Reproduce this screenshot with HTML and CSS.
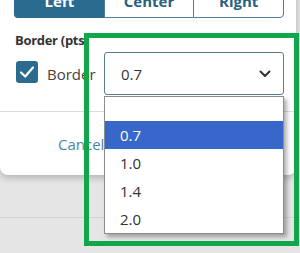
FILE: index.html
```html
<!DOCTYPE html>
<html>
<head>
<meta charset="utf-8">
<link rel="stylesheet" href="styles.css">
</head>
<body>
<div class="page">
  <div class="card">
    <div class="seg">
      <div class="seg-btn active">Left</div>
      <div class="seg-btn">Center</div>
      <div class="seg-btn last">Right</div>
    </div>
    <div class="section">
      <div class="label">Border (pts)</div>
      <div class="row">
        <span class="checkbox">
          <svg width="22" height="22" viewBox="0 0 22 22"><polyline points="5,11.5 9.2,15.5 17,6.5" fill="none" stroke="#fff" stroke-width="2.2" stroke-linecap="round" stroke-linejoin="round"/></svg>
        </span>
        <span class="cb-label">Border</span>
        <div class="select">
          <span>0.7</span>
          <svg class="chev" width="12" height="8" viewBox="0 0 12 8"><polyline points="1.5,1.5 6,6 10.5,1.5" fill="none" stroke="#333" stroke-width="2" stroke-linecap="round" stroke-linejoin="round"/></svg>
        </div>
      </div>
    </div>
    <div class="divider"></div>
    <div class="footer"><span class="cancel">Cancel</span></div>
  </div>
  <div class="bottom-line"></div>

  <ul class="list">
    <li class="blank"></li>
    <li class="sel">0.7</li>
    <li>1.0</li>
    <li>1.4</li>
    <li>2.0</li>
  </ul>
  <div class="highlight-frame"></div>
</div>
</body>
</html>
```

FILE: styles.css
```css
html, body {
  margin: 0;
  padding: 0;
}
body {
  width: 300px;
  height: 253px;
  overflow: hidden;
  background: #e5e5e5;
  font-family: "Open Sans", "DejaVu Sans", sans-serif;
  color: #333;
}
.page {
  position: relative;
  display: flow-root;
  width: 300px;
  height: 253px;
}
.card {
  width: 296px;
  margin-top: -17px;
  background: #fff;
  border-radius: 0 0 8px 8px;
  box-shadow: 0 3px 7px rgba(0, 0, 0, 0.22);
}
.seg {
  display: flex;
  margin-left: 14px;
  width: 270px;
}
.seg-btn {
  flex: 1;
  text-align: center;
  font-size: 15px;
  font-weight: 700;
  line-height: 20px;
  padding: 7px 0 6px;
  border: 1px solid #4f7f9c;
  border-right: none;
  color: #2b5f7e;
  background: #fff;
}
.seg-btn.active {
  background: #2b6b8f;
  border-color: #2b6b8f;
  color: #fff;
  border-bottom-left-radius: 4px;
}
.seg-btn.last {
  border-right: 1px solid #4f7f9c;
  border-bottom-right-radius: 4px;
}
.section {
  padding-left: 15px;
}
.label {
  margin-top: 13px;
  font-size: 13px;
  font-weight: 700;
  line-height: 18px;
  letter-spacing: -0.3px;
  color: #333;
}
.row {
  display: flex;
  align-items: center;
  margin-top: 3px;
}
.checkbox {
  width: 22px;
  height: 22px;
  margin-left: 1px;
  margin-top: -3px;
  border-radius: 3px;
  background: #2b6b8f;
  display: block;
}
.checkbox svg {
  display: block;
}
.cb-label {
  margin-left: 9px;
  font-size: 15px;
  line-height: 20px;
  color: #444;
  width: 57px;
}
.select {
  width: 180px;
  height: 43px;
  box-sizing: border-box;
  border: 1px solid #5a7d94;
  border-radius: 3px;
  display: flex;
  align-items: center;
  justify-content: space-between;
  padding: 0 12px 0 16px;
  font-size: 15px;
  color: #333;
}
.chev {
  display: block;
}
.divider {
  margin-top: 16px;
  border-top: 1px solid #dcdcdc;
}
.footer {
  height: 63px;
  display: flex;
  align-items: center;
  padding-left: 58px;
}
.cancel {
  font-size: 15px;
  color: #4a87aa;
}
.bottom-line {
  margin-top: 42px;
  border-top: 1px solid #d2d2d2;
}
.list {
  position: absolute;
  left: 104px;
  top: 96px;
  width: 180px;
  box-sizing: border-box;
  margin: 0;
  padding: 0;
  list-style: none;
  background: #fff;
  border: 1px solid #8c8c8c;
  box-shadow: 3px 3px 4px rgba(0, 0, 0, 0.3);
  font-size: 15px;
  color: #333;
}
.list li {
  height: 28px;
  line-height: 28px;
  padding-left: 15px;
}
.list li.blank {
  height: 24px;
}
.list li.sel {
  background: #3767c8;
  color: #fff;
}
.highlight-frame {
  position: absolute;
  left: 84px;
  top: 33px;
  width: 215px;
  height: 213px;
  box-sizing: border-box;
  border: 5px solid #10a64a;
}
```
